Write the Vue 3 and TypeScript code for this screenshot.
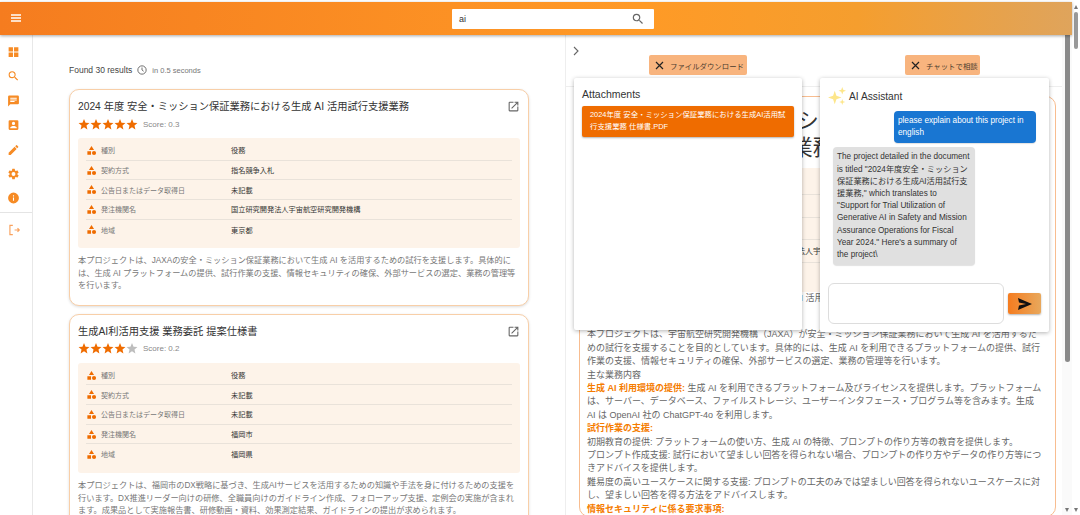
<template>
  <div class="app">
    <div class="page">
      <header class="topbar">
        <button class="menu-btn" aria-label="menu">
          <svg width="10" height="8" viewBox="0 0 10 8"><path d="M0 1h10M0 4h10M0 7h10" stroke="#fff" stroke-width="1.300" /></svg>
        </button>
        <div class="search">
          <span class="search-text">ai</span>
          <svg class="search-icon" width="14" height="14" viewBox="0 0 24 24"><path :d="icons.search" fill="#666" /></svg>
        </div>
      </header>

      <div class="body">
        <nav class="sidebar">
          <div class="nav-main">
            <svg v-for="n in navIcons" :key="n" width="13" height="14" viewBox="0 0 24 24"><path :d="n" fill="#f68b25" /></svg>
          </div>
          <div class="nav-foot">
            <svg width="14" height="14" viewBox="0 0 24 24"><path d="M10 4H5v16h5M13 12h8M18 9l3 3-3 3" fill="none" stroke="#f9a25e" stroke-width="2" /></svg>
          </div>
        </nav>

        <main class="results">
          <div class="summary">
            <span>Found 30 results</span>
            <svg width="10" height="10" viewBox="0 0 24 24"><circle cx="12" cy="12" r="10" fill="none" stroke="#555" stroke-width="2" /><path d="M12 6v6l4 3" fill="none" stroke="#555" stroke-width="2" /></svg>
            <small>in 0.5 seconds</small>
          </div>

          <article v-for="r in results" :key="r.title" class="card">
            <div class="card-head">
              <h2>{{ r.title }}</h2>
              <svg width="13" height="13" viewBox="0 0 24 24"><path :d="icons.open" fill="#666" /></svg>
            </div>
            <div class="rating">
              <svg v-for="s in 5" :key="s" width="12" height="13" viewBox="1 1 22 22"><path :d="icons.star" :fill="s > r.stars ? '#bdbdbd' : '#ef6c00'" /></svg>
              <span class="score">Score: {{ r.score }}</span>
            </div>
            <div class="meta">
              <div v-for="m in r.meta" :key="m[0]" class="meta-row">
                <div class="meta-label">
                  <svg width="11" height="11" viewBox="0 0 24 24"><path :d="icons.category" fill="#ef6c00" /></svg>
                  <span>{{ m[0] }}</span>
                </div>
                <div class="meta-value">{{ m[1] }}</div>
              </div>
            </div>
            <p class="desc">{{ r.desc }}</p>
          </article>
        </main>

        <section class="detail">
          <div class="detail-top">
            <svg class="chevron" width="10" height="10" viewBox="0 0 10 10"><path d="M3 1l4 4-4 4" fill="none" stroke="#666" stroke-width="1.100" /></svg>
            <div class="toggles">
              <button class="toggle t-file">
                <svg width="9" height="9" viewBox="0 0 9 9"><path d="M1 1l7 7M8 1L1 8" stroke="#222" stroke-width="1.200" /></svg>
                ファイルダウンロード
              </button>
              <button class="toggle t-chat">
                <svg width="9" height="9" viewBox="0 0 9 9"><path d="M1 1l7 7M8 1L1 8" stroke="#222" stroke-width="1.200" /></svg>
                チャットで相談
              </button>
            </div>
          </div>

          <article class="doc">
            <h1>2024 年度 安全・ミッション保証業務における生成 AI 活用試行支援業務</h1>
            <div class="doc-meta">
              <div v-for="m in results[0].meta" :key="m[0]" class="doc-row">
                <span>{{ m[0] }}</span><span class="doc-val">{{ m[1] }}</span>
              </div>
            </div>
            <div class="doc-text">
              <p class="doc-lead">2024 年度 安全・ミッション保証業務における生成 AI 活用試行支援業務の概要</p>
              <p>本プロジェクトは、宇宙航空研究開発機構（JAXA）が安全・ミッション保証業務において生成 AI を活用するための試行を支援することを目的としています。具体的には、生成 AI を利用できるプラットフォームの提供、試行作業の支援、情報セキュリティの確保、外部サービスの選定、業務の管理等を行います。</p>
              <p>主な業務内容</p>
              <p><b>生成 AI 利用環境の提供:</b> 生成 AI を利用できるプラットフォーム及びライセンスを提供します。プラットフォームは、サーバー、データベース、ファイルストレージ、ユーザーインタフェース・プログラム等を含みます。生成 AI は OpenAI 社の ChatGPT-4o を利用します。</p>
              <p><b>試行作業の支援:</b></p>
              <p>初期教育の提供: プラットフォームの使い方、生成 AI の特徴、プロンプトの作り方等の教育を提供します。</p>
              <p>プロンプト作成支援: 試行において望ましい回答を得られない場合、プロンプトの作り方やデータの作り方等につきアドバイスを提供します。</p>
              <p>難易度の高いユースケースに関する支援: プロンプトの工夫のみでは望ましい回答を得られないユースケースに対し、望ましい回答を得る方法をアドバイスします。</p>
              <p><b>情報セキュリティに係る要求事項:</b></p>
            </div>
          </article>

          <aside class="panel attachments">
            <h3>Attachments</h3>
            <div class="file">2024年度 安全・ミッション保証業務における生成AI活用試行支援業務 仕様書.PDF</div>
          </aside>

          <aside class="panel chat">
            <div class="chat-head">
              <svg width="18" height="18" viewBox="0 0 24 24"><path d="M9 5l2.200 6.800L18 14l-6.800 2.200L9 23l-2.200-6.800L0 14l6.800-2.200zM19 0l1.300 3.700L24 5l-3.700 1.300L19 10l-1.300-3.700L14 5l3.700-1.300zM19 16l1 3 3 1-3 1-1 3-1-3-3-1 3-1z" fill="#fde68a" /></svg>
              <span>AI Assistant</span>
            </div>
            <div class="bubble user">please explain about this project in english</div>
            <div class="bubble bot">The project detailed in the document is titled "2024年度安全・ミッション保証業務における生成AI活用試行支援業務," which translates to "Support for Trial Utilization of Generative AI in Safety and Mission Assurance Operations for Fiscal Year 2024." Here's a summary of the project\</div>
            <div class="chat-input">
              <div class="input-box"></div>
              <button class="send" aria-label="send">
                <svg width="14" height="12" viewBox="0 0 14 12"><path d="M0 0l14 6-14 6 1-4.500L8 6 1 4.500z" fill="#111" /></svg>
              </button>
            </div>
          </aside>
        </section>

        <div class="inner-scroll">
          <div class="inner-thumb"></div>
          <i class="arrow-down"></i>
        </div>
      </div>
    </div>

    <div class="outer-scroll">
      <i class="arrow-up"></i>
      <div class="outer-thumb"></div>
      <i class="arrow-down"></i>
    </div>
  </div>
</template>

<script setup lang="ts">
const icons = {
  search: 'M15.500 14h-.79l-.28-.27A6.470 6.470 0 0 0 16 9.500 6.500 6.500 0 1 0 9.500 16c1.610 0 3.090-.59 4.230-1.570l.27.28v.79l5 4.990L20.490 19l-4.990-5zm-6 0C7.010 14 5 11.990 5 9.500S7.010 5 9.500 5 14 7.010 14 9.500 11.990 14 9.500 14z',
  open: 'M19 19H5V5h7V3H5a2 2 0 0 0-2 2v14a2 2 0 0 0 2 2h14a2 2 0 0 0 2-2v-7h-2v7zM14 3v2h3.590l-9.830 9.830 1.410 1.410L19 6.410V10h2V3h-7z',
  category: 'M12 2l-5.500 9h11L12 2zM17.500 13a4.500 4.500 0 1 0 0 9 4.500 4.500 0 0 0 0-9zM3 13.500h8v8H3v-8z',
  star: 'M12 17.270L18.180 21l-1.640-7.030L22 9.240l-7.190-.61L12 2 9.190 8.630 2 9.240l5.460 4.730L5.820 21z',
}

const navIcons = [
  'M3 3h8v8H3zM13 3h8v8h-8zM3 13h8v8H3zM13 13h8v8h-8z',
  icons.search,
  'M20 2H4a2 2 0 0 0-2 2v18l4-4h14a2 2 0 0 0 2-2V4a2 2 0 0 0-2-2zM6 9h12v2H6zm8 5H6v-2h8zm4-6H6V6h12z',
  'M3 5v14a2 2 0 0 0 2 2h14a2 2 0 0 0 2-2V5a2 2 0 0 0-2-2H5a2 2 0 0 0-2 2zm12 4a3 3 0 1 1-6 0 3 3 0 0 1 6 0zm-9 8c0-2 4-3.100 6-3.100s6 1.100 6 3.100v1H6v-1z',
  'M3 17.250V21h3.750L17.810 9.940l-3.750-3.750L3 17.250zM20.710 7.040a1 1 0 0 0 0-1.410l-2.340-2.340a1 1 0 0 0-1.410 0l-1.830 1.830 3.750 3.750 1.830-1.830z',
  'M19.140 12.940c.04-.3.060-.61.060-.94s-.02-.64-.07-.94l2.030-1.580a.49.49 0 0 0 .12-.61l-1.920-3.320a.49.490 0 0 0-.59-.22l-2.390.96a7 7 0 0 0-1.620-.94l-.36-2.540a.48.480 0 0 0-.48-.41h-3.840a.47.470 0 0 0-.47.41l-.36 2.540c-.59.24-1.130.57-1.620.94l-2.390-.96a.48.480 0 0 0-.59.22L2.740 8.870a.47.470 0 0 0 .12.61l2.030 1.580c-.05.3-.09.63-.09.940s.02.64.07.94l-2.030 1.580a.49.49 0 0 0-.12.61l1.920 3.320c.12.22.37.29.59.22l2.390-.96c.5.380 1.030.70 1.620.94l.36 2.540c.05.24.24.41.48.41h3.840c.24 0 .44-.17.47-.41l.36-2.540c.59-.24 1.130-.56 1.620-.94l2.390.96c.22.08.47 0 .59-.22l1.920-3.320a.47.470 0 0 0-.12-.61l-2.010-1.580zM12 15.600a3.600 3.600 0 1 1 0-7.200 3.600 3.600 0 0 1 0 7.200z',
  'M12 2a10 10 0 1 0 0 20 10 10 0 0 0 0-20zm1 15h-2v-6h2v6zm0-8h-2V7h2v2z',
]

interface Result {
  title: string
  stars: number
  score: string
  meta: [string, string][]
  desc: string
}

const results: Result[] = [
  {
    title: '2024 年度 安全・ミッション保証業務における生成 AI 活用試行支援業務',
    stars: 5,
    score: '0.3',
    meta: [
      ['種別', '役務'],
      ['契約方式', '指名競争入札'],
      ['公告日またはデータ取得日', '未記載'],
      ['発注機関名', '国立研究開発法人宇宙航空研究開発機構'],
      ['地域', '東京都'],
    ],
    desc: '本プロジェクトは、JAXAの安全・ミッション保証業務において生成 AI を活用するための試行を支援します。具体的には、生成 AI プラットフォームの提供、試行作業の支援、情報セキュリティの確保、外部サービスの選定、業務の管理等を行います。',
  },
  {
    title: '生成AI利活用支援 業務委託 提案仕様書',
    stars: 4,
    score: '0.2',
    meta: [
      ['種別', '役務'],
      ['契約方式', '未記載'],
      ['公告日またはデータ取得日', '未記載'],
      ['発注機関名', '福岡市'],
      ['地域', '福岡県'],
    ],
    desc: '本プロジェクトは、福岡市のDX戦略に基づき、生成AIサービスを活用するための知識や手法を身に付けるための支援を行います。DX推進リーダー向けの研修、全職員向けのガイドライン作成、フォローアップ支援、定例会の実施が含まれます。成果品として実施報告書、研修動画・資料、効果測定結果、ガイドラインの提出が求められます。',
  },
]
</script>

<style>
html, body {
  margin: 0;
  height: 100%;
  overflow: hidden;
  background: #fff;
}
</style>

<style scoped>
.app {
  width: 1080px;
  height: 515px;
  display: flex;
  overflow: hidden;
  font-family: "Liberation Sans", "Noto Sans CJK JP", sans-serif;
  color: #333;
}

.page {
  width: 1072px;
  flex: none;
  display: flex;
  flex-direction: column;
}

.topbar {
  height: 33px;
  margin-top: 2px;
  padding-left: 34px;
  flex: none;
  display: flex;
  align-items: center;
  justify-content: center;
  position: relative;
  z-index: 5;
  background: linear-gradient(90deg, #f57c1f 0%, #ff9a26 60%, #f59e2e 80%, #dfa45c 100%);
  box-shadow: 0 1px 3px rgba(0, 0, 0, .35);
}

.menu-btn {
  position: absolute;
  left: 11px;
  top: 12px;
  padding: 0;
  border: none;
  background: none;
  line-height: 0;
}

.search {
  width: 202px;
  height: 20px;
  box-sizing: border-box;
  padding: 0 9px 0 7px;
  background: #fff;
  border-radius: 1px;
  display: flex;
  align-items: center;
  justify-content: space-between;
  font-size: 9px;
}

.body {
  flex: 1;
  min-height: 0;
  display: flex;
}

.sidebar {
  width: 33px;
  flex: none;
  border-right: 1px solid #e8e8e8;
  box-sizing: border-box;
}

.nav-main {
  display: flex;
  flex-direction: column;
  align-items: center;
  gap: 10.400px;
  padding: 10px 5px 7px 0;
  border-bottom: 1px solid #e4e4e4;
}

.nav-foot {
  padding: 10px 0 0 7px;
}

.results {
  width: 533px;
  flex: none;
  box-sizing: border-box;
  padding: 29px 36px 0 36px;
  border-right: 1px solid #eee;
}

.summary {
  display: flex;
  align-items: center;
  gap: 5px;
  height: 12px;
  font-size: 8.500px;
  color: #444;
}

.summary small {
  font-size: 7.500px;
  color: #777;
}

.card {
  margin-top: 13px;
  padding: 8px 8px 12px;
  border: 1px solid #f8cfa8;
  border-radius: 10px;
  box-shadow: 0 1px 3px rgba(0, 0, 0, .14);
  background: #fff;
}

.card + .card {
  margin-top: 8px;
}

.card-head {
  display: flex;
  justify-content: space-between;
  align-items: center;
}

h2 {
  margin: 0;
  font-size: 10.250px;
  font-weight: 400;
  line-height: 17px;
  color: #333;
}

.rating {
  display: flex;
  align-items: center;
  margin: 1px 0 6px;
  height: 16px;
}

.score {
  margin-left: 5px;
  font-size: 8px;
  color: #888;
}

.meta {
  background: #fdf3e9;
  border-radius: 3px;
  padding: 3px 8px 9px;
}

.meta-row {
  display: grid;
  grid-template-columns: 145px 1fr;
  align-items: center;
  box-sizing: border-box;
  height: 19.700px;
  border-bottom: 1px solid #e9e2da;
}

.meta-row:last-child {
  border-bottom: none;
}

.meta-label {
  display: flex;
  align-items: center;
  gap: 4px;
  font-size: 7px;
  color: #777;
}

.meta-value {
  font-size: 7.200px;
  color: #333;
}

.desc {
  margin: 7px 0 0;
  font-size: 8.200px;
  line-height: 12.400px;
  color: #777;
}

.detail {
  flex: 1;
  min-width: 0;
  position: relative;
}

.detail-top {
  height: 52px;
  box-sizing: border-box;
  border-bottom: 1px solid #eee;
  position: relative;
}

.chevron {
  position: absolute;
  left: 5px;
  top: 11px;
}

.toggles {
  display: flex;
  gap: 158px;
  padding: 20px 0 0 83px;
}

.toggle {
  height: 20px;
  padding: 0 0 0 6px;
  display: flex;
  align-items: center;
  gap: 6px;
  border: none;
  border-radius: 2px;
  background: #f8b47e;
  color: #4a3b2d;
  font-family: inherit;
  font-size: 7.400px;
  white-space: nowrap;
}

.t-file {
  width: 98px;
}

.t-chat {
  width: 75px;
}

.doc {
  margin: 9px 6px 0 13px;
  padding: 11px 13px 0 7px;
  border: 1px solid #f8bd90;
  border-radius: 10px;
  background: #fff;
}

h1 {
  margin: 0;
  font-size: 21.500px;
  line-height: 27px;
  font-weight: 400;
  color: #333;
}

.doc-meta {
  margin: 6px -6px 0 0;
  height: 124px;
  box-sizing: border-box;
  padding: 5px 8px 0;
  background: #fdf3e9;
  font-size: 8px;
  color: #777;
}

.doc-row {
  display: grid;
  grid-template-columns: 154px 1fr;
  align-items: center;
  box-sizing: border-box;
  height: 22.400px;
  border-bottom: 1px solid #e9e2da;
}

.doc-row:last-child {
  border-bottom: none;
}

.doc-val {
  color: #333;
}

.doc-text {
  font-size: 9px;
  line-height: 13.400px;
  color: #666;
}

.doc-text p {
  margin: 0;
}

.doc-text .doc-lead {
  margin-bottom: 22.900px;
}

.doc-text b {
  font-weight: 700;
  color: #f57c00;
}

.panel {
  position: absolute;
  top: 43px;
  box-sizing: border-box;
  background: #fff;
  border-radius: 2px;
  box-shadow: 0 1px 4px rgba(0, 0, 0, .3);
  z-index: 2;
}

.attachments {
  left: 8px;
  width: 228px;
  height: 252px;
  padding: 10px 8px;
}

h3 {
  margin: 0 0 6px;
  font-size: 10.500px;
  line-height: 12px;
  font-weight: 400;
  color: #333;
}

.file {
  padding: 3px 6px 3px 8px;
  background: #ef6c00;
  border-radius: 2px;
  box-shadow: 0 1px 2px rgba(0, 0, 0, .3);
  color: #fff;
  font-size: 7.400px;
  line-height: 12.400px;
}

.chat {
  left: 254px;
  width: 229px;
  height: 254px;
  padding: 9px 8px 0;
  display: flex;
  flex-direction: column;
}

.chat-head {
  display: flex;
  align-items: center;
  gap: 3px;
  height: 18px;
  font-size: 10.200px;
}

.bubble {
  box-sizing: border-box;
  font-size: 8.200px;
  line-height: 12.200px;
  border-radius: 4px;
  box-shadow: 0 1px 1px rgba(0, 0, 0, .12);
}

.user {
  margin: 6px 5px 0 auto;
  width: 142px;
  padding: 4px;
  background: #1976d2;
  color: #fff;
}

.bot {
  margin: 4px 0 0 5px;
  width: 142px;
  padding: 4px 4.800px 4px 4px;
  background: #e0e0e0;
  color: #333;
}

.chat-input {
  position: absolute;
  left: 8px;
  top: 205px;
  display: flex;
  align-items: flex-end;
  gap: 4px;
}

.input-box {
  width: 176px;
  height: 41px;
  box-sizing: border-box;
  border: 1px solid #ddd;
  border-radius: 6px;
}

.send {
  width: 33px;
  height: 21px;
  margin-bottom: 10px;
  padding: 0;
  display: flex;
  align-items: center;
  justify-content: center;
  border: none;
  border-radius: 2px;
  background: linear-gradient(90deg, #f57c1f, #e8a85c);
  box-shadow: 0 1px 2px rgba(0, 0, 0, .3);
}

.inner-scroll {
  width: 10px;
  flex: none;
  position: relative;
  background: #fafafa;
}

.inner-thumb {
  width: 5px;
  height: 327px;
  margin-left: 3px;
  border-radius: 0 0 3px 3px;
  background: #8a8a8a;
}

.outer-scroll {
  flex: 1;
  position: relative;
  background: #fff;
}

.outer-thumb {
  position: absolute;
  left: 2px;
  top: 12px;
  width: 4px;
  height: 37px;
  border-radius: 2px;
  background: #999;
}

.arrow-up,
.arrow-down {
  position: absolute;
  width: 0;
  height: 0;
  border-left: 2.500px solid transparent;
  border-right: 2.500px solid transparent;
}

.arrow-up {
  left: 1.500px;
  top: 5px;
  border-bottom: 4px solid #777;
}

.arrow-down {
  left: 1.500px;
  bottom: 3px;
  border-top: 4px solid #777;
}

.inner-scroll .arrow-down {
  left: 3px;
}
</style>
